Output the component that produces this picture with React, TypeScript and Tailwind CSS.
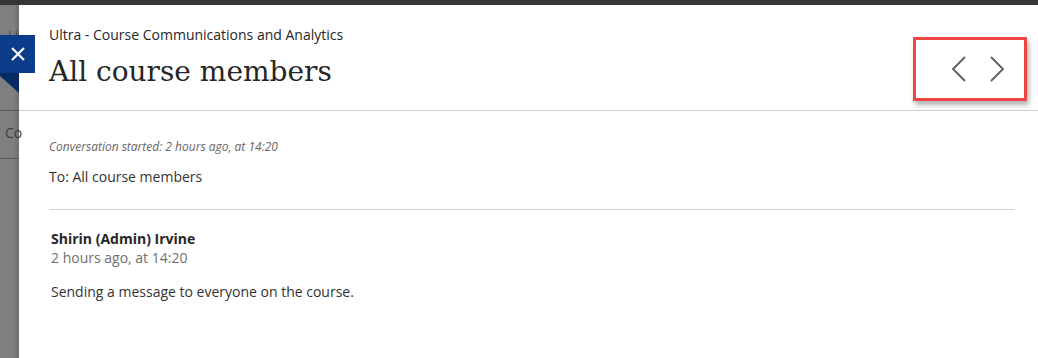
import React from 'react'

const App: React.FC = () => {
  return (
    <div className="relative w-[1038px] h-[358px] overflow-hidden bg-[#7f7f7f] font-['Open_Sans',sans-serif]">
      <div className="h-[5px] bg-[#363636]" />
      <div className="flex h-[353px]">
        {/* dimmed page behind the panel */}
        <div className="relative w-[19px] shrink-0 bg-[#7f7f7f] text-[#4a4a4a]">
          <div className="pl-[8px] pt-[21px] text-[14px] leading-[20px] text-[#5a5040]">U</div>
          <div className="mt-[64px] border-t border-[#5e5e5e]" />
          <div className="pl-[5px] pt-[12px] text-[14px] leading-[20px] text-[#3e3e3e]">Co</div>
          <div className="mt-[15px] border-t border-[#5e5e5e]" />
          <div className="absolute right-0 top-0 h-full w-[5px] bg-gradient-to-r from-transparent to-[rgba(0,0,0,0.14)]" />
        </div>

        <div className="flex-1 bg-white">
          <div className="flex h-[106px] items-start justify-between border-b border-[#cdcdcd] pl-[30px] pr-[11px] pt-[20px]">
            <div>
              <div className="text-[14px] leading-[20px] text-[#262626]">
                Ultra - Course Communications and Analytics
              </div>
              <h1 className="mt-[9px] font-['DejaVu_Serif',serif] text-[28px] leading-[36px] text-[#262626]">
                All course members
              </h1>
            </div>
            <div className="mt-[12px] flex h-[64px] w-[114px] items-center justify-end gap-[22px] border-[3px] border-[#f04545] pr-[19px] shadow-[2px_4px_5px_rgba(0,0,0,0.3)]">
              <button className="text-[#5c5c5c]">
                <svg width="16" height="26" viewBox="0 0 16 26" fill="none">
                  <path d="M14 1 L2 13 L14 25" stroke="currentColor" strokeWidth="1.8" />
                </svg>
              </button>
              <button className="text-[#5c5c5c]">
                <svg width="16" height="26" viewBox="0 0 16 26" fill="none">
                  <path d="M2 1 L14 13 L2 25" stroke="currentColor" strokeWidth="1.8" />
                </svg>
              </button>
            </div>
          </div>

          <div className="pl-[30px] pr-[23px] pt-[28px]">
            <p className="text-[12px] italic leading-[16px] text-[#666666]">
              Conversation started: 2 hours ago, at 14:20
            </p>
            <p className="mt-[12px] text-[14px] leading-[20px] text-[#333333]">To: All course members</p>
            <div className="mt-[22px] border-t border-[#d2d2d2] pl-[2px] pt-[19px]">
              <p className="text-[14px] font-bold leading-[19px] text-[#262626]">Shirin (Admin) Irvine</p>
              <p className="text-[14px] leading-[19px] text-[#707070]">2 hours ago, at 14:20</p>
              <p className="mt-[15px] text-[14px] leading-[20px] text-[#333333]">
                Sending a message to everyone on the course.
              </p>
            </div>
          </div>
        </div>
      </div>

      {/* close tab hanging over the panel edge */}
      <div className="absolute left-0 top-[35px]">
        <button className="flex h-[38px] w-[35px] items-center justify-center bg-[#0b3c8a] text-white">
          <svg width="16" height="16" viewBox="0 0 16 16" fill="none">
            <path d="M2 2 L14 14 M14 2 L2 14" stroke="currentColor" strokeWidth="2.2" />
          </svg>
        </button>
        <svg width="19" height="20" viewBox="0 0 19 20" className="block">
          <polygon points="0,0 19,0 19,20 0,3" fill="#082b66" />
        </svg>
      </div>
    </div>
  )
}

export default App
